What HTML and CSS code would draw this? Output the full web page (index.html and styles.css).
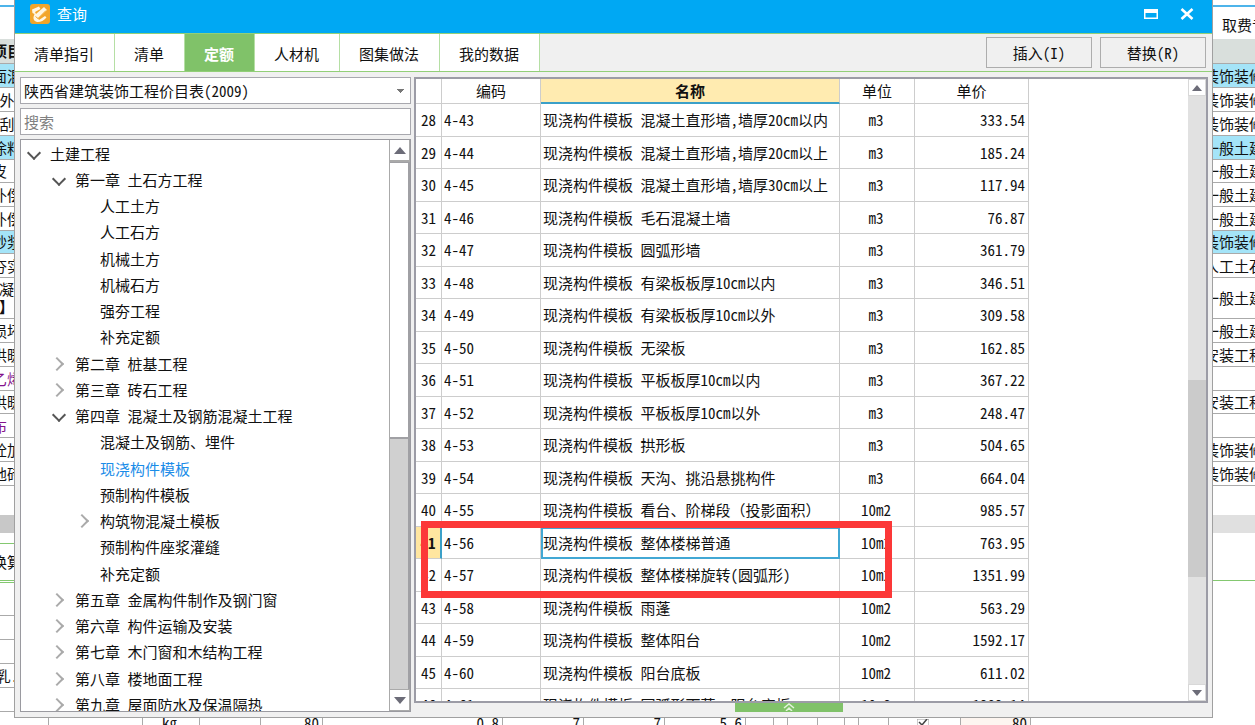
FILE: index.html
```html
<!DOCTYPE html>
<html lang="zh-CN">
<head>
<meta charset="utf-8">
<title>查询</title>
<link rel="stylesheet" href="styles.css">
</head>
<body>
<div class="desktop">
  <aside class="strip strip-left">
    <div class="strip-top"></div>
    <div class="strip-head">项目</div>
    <div class="cell blue">面混</div>
    <div class="cell">外</div>
    <div class="cell">刮</div>
    <div class="cell blue">涂料</div>
    <div class="cell short">皮　</div>
    <div class="cell">补偿</div>
    <div class="cell">补偿</div>
    <div class="cell short blue">砂浆</div>
    <div class="cell">夯实</div>
    <div class="cell tall"><span>混凝</span><b>】</b></div>
    <div class="cell">损坏</div>
    <div class="cell">供暖</div>
    <div class="cell purple">乙烯</div>
    <div class="cell short">供暖</div>
    <div class="cell purple">布　</div>
    <div class="cell">砼加</div>
    <div class="cell">地砖</div>
    <div class="blank"></div>
    <div class="bar dark"></div>
    <div class="caption">换算</div>
    <div class="blank"></div>
    <div class="cell"></div>
    <div class="cell"></div>
    <div class="cell">乳.</div>
    <div class="cell"></div>
  </aside>

  <main class="dialog">
    <header class="titlebar">
      <svg class="logo" viewBox="0 0 20 20" aria-hidden="true">
        <rect width="20" height="20" rx="3" fill="#f2a52a"/>
        <path d="M2 5.500 9 2.500l1.500 2.500L5 8l1 2 8-7 3 3-9 8.500 1 1.500 6-4 1.500 1.500Q12 18.500 7 18q-4-1-3.500-5L4.500 10 2.500 9z" fill="#fff6e2"/>
        <path d="m5.500 12.500 2.500 2 8-8" fill="none" stroke="#f2a52a"/>
      </svg>
      <h1>查询</h1>
      <button class="winbtn" aria-label="最大化"><svg width="14" height="10" viewBox="0 0 14 10"><path d="M0 0h14v10H0zM1.500 4v4.500h11V4z" fill="#fff" fill-rule="evenodd"/></svg></button>
      <button class="winbtn" aria-label="关闭"><svg width="14" height="12" viewBox="0 0 14 12"><path d="m1.500 1 11 10m0-10-11 10" stroke="#fff" stroke-width="2.600"/></svg></button>
    </header>

    <nav class="toolbar">
      <button class="tab">清单指引</button>
      <button class="tab">清单</button>
      <button class="tab active">定额</button>
      <button class="tab">人材机</button>
      <button class="tab">图集做法</button>
      <button class="tab">我的数据</button>
      <div class="actions">
        <button class="action">插入(I)</button>
        <button class="action">替换(R)</button>
      </div>
    </nav>

    <div class="body">
      <section class="side">
        <select class="field combo" aria-label="定额库"><option>陕西省建筑装饰工程价目表(2009)</option></select>
        <input class="field" type="text" placeholder="搜索" aria-label="搜索">
        <div class="treebox">
          <ul class="tree">
            <li class="node l0 open">土建工程</li>
            <li class="node l1 open">第一章 土石方工程</li>
            <li class="node l2">人工土方</li>
            <li class="node l2">人工石方</li>
            <li class="node l2">机械土方</li>
            <li class="node l2">机械石方</li>
            <li class="node l2">强夯工程</li>
            <li class="node l2">补充定额</li>
            <li class="node l1 closed">第二章 桩基工程</li>
            <li class="node l1 closed">第三章 砖石工程</li>
            <li class="node l1 open">第四章 混凝土及钢筋混凝土工程</li>
            <li class="node l2">混凝土及钢筋、埋件</li>
            <li class="node l2 current">现浇构件模板</li>
            <li class="node l2">预制构件模板</li>
            <li class="node l2 closed">构筑物混凝土模板</li>
            <li class="node l2">预制构件座浆灌缝</li>
            <li class="node l2">补充定额</li>
            <li class="node l1 closed">第五章 金属构件制作及钢门窗</li>
            <li class="node l1 closed">第六章 构件运输及安装</li>
            <li class="node l1 closed">第七章 木门窗和木结构工程</li>
            <li class="node l1 closed">第八章 楼地面工程</li>
            <li class="node l1 closed">第九章 屋面防水及保温隔热</li>
          </ul>
          <div class="scroll scroll-tree">
            <button class="arrow" aria-label="向上"><svg width="12" height="7" viewBox="0 0 12 7"><path d="M0 7 6 0l6 7z"/></svg></button>
            <div class="thumb"></div>
            <div class="rest"></div>
            <button class="arrow" aria-label="向下"><svg width="12" height="7" viewBox="0 0 12 7"><path d="M0 0h12L6 7z"/></svg></button>
          </div>
        </div>
      </section>

      <section class="content">
        <div class="gridbox">
          <div class="gridview">
            <table>
              <colgroup><col class="c-no"><col class="c-code"><col class="c-name"><col class="c-unit"><col class="c-price"></colgroup>
              <thead><tr><th></th><th>编码</th><th class="sorted">名称</th><th>单位</th><th>单价</th></tr></thead>
              <tbody>
                <tr><td>28</td><td>4-43</td><td>现浇构件模板 混凝土直形墙,墙厚20cm以内</td><td>m3</td><td>333.54</td></tr>
                <tr><td>29</td><td>4-44</td><td>现浇构件模板 混凝土直形墙,墙厚20cm以上</td><td>m3</td><td>185.24</td></tr>
                <tr><td>30</td><td>4-45</td><td>现浇构件模板 混凝土直形墙,墙厚30cm以上</td><td>m3</td><td>117.94</td></tr>
                <tr><td>31</td><td>4-46</td><td>现浇构件模板 毛石混凝土墙</td><td>m3</td><td>76.87</td></tr>
                <tr><td>32</td><td>4-47</td><td>现浇构件模板 圆弧形墙</td><td>m3</td><td>361.79</td></tr>
                <tr><td>33</td><td>4-48</td><td>现浇构件模板 有梁板板厚10cm以内</td><td>m3</td><td>346.51</td></tr>
                <tr><td>34</td><td>4-49</td><td>现浇构件模板 有梁板板厚10cm以外</td><td>m3</td><td>309.58</td></tr>
                <tr><td>35</td><td>4-50</td><td>现浇构件模板 无梁板</td><td>m3</td><td>162.85</td></tr>
                <tr><td>36</td><td>4-51</td><td>现浇构件模板 平板板厚10cm以内</td><td>m3</td><td>367.22</td></tr>
                <tr><td>37</td><td>4-52</td><td>现浇构件模板 平板板厚10cm以外</td><td>m3</td><td>248.47</td></tr>
                <tr><td>38</td><td>4-53</td><td>现浇构件模板 拱形板</td><td>m3</td><td>504.65</td></tr>
                <tr><td>39</td><td>4-54</td><td>现浇构件模板 天沟、挑沿悬挑构件</td><td>m3</td><td>664.04</td></tr>
                <tr><td>40</td><td>4-55</td><td>现浇构件模板 看台、阶梯段（投影面积）</td><td>10m2</td><td>985.57</td></tr>
                <tr class="selected"><td>41</td><td>4-56</td><td>现浇构件模板 整体楼梯普通</td><td>10m2</td><td>763.95</td></tr>
                <tr><td>42</td><td>4-57</td><td>现浇构件模板 整体楼梯旋转(圆弧形)</td><td>10m2</td><td>1351.99</td></tr>
                <tr><td>43</td><td>4-58</td><td>现浇构件模板 雨蓬</td><td>10m2</td><td>563.29</td></tr>
                <tr><td>44</td><td>4-59</td><td>现浇构件模板 整体阳台</td><td>10m2</td><td>1592.17</td></tr>
                <tr><td>45</td><td>4-60</td><td>现浇构件模板 阳台底板</td><td>10m2</td><td>611.02</td></tr>
                <tr><td>46</td><td>4-61</td><td>现浇构件模板 圆弧形雨蓬、阳台底板</td><td>10m2</td><td>1282.14</td></tr>
              </tbody>
            </table>
          </div>
          <div class="scroll scroll-grid">
            <button class="arrow" aria-label="向上"><svg width="10" height="6" viewBox="0 0 10 6"><path d="M0 6 5 0l5 6z"/></svg></button>
            <div class="before"></div>
            <div class="thumb"></div>
            <div class="rest"></div>
            <button class="arrow" aria-label="向下"><svg width="10" height="6" viewBox="0 0 10 6"><path d="M0 0h10L5 6z"/></svg></button>
          </div>
          <div class="highlight"></div>
        </div>
        <button class="expander" aria-label="展开"><svg width="12" height="8" viewBox="0 0 12 8"><path d="m1 5 5-4 5 4M3 8l3-3 3 3" fill="none" stroke="#e4f4dc" stroke-width="1.500"/></svg></button>
      </section>
    </div>
  </main>

  <aside class="strip strip-right">
    <div class="strip-top">取费专业</div>
    <div class="strip-head"></div>
    <div class="cell blue">装饰装修</div>
    <div class="cell">装饰装修</div>
    <div class="cell">装饰装修</div>
    <div class="cell blue">一般土建</div>
    <div class="cell short">一般土建</div>
    <div class="cell">一般土建</div>
    <div class="cell">一般土建</div>
    <div class="cell short blue">装饰装修</div>
    <div class="cell">人工土石</div>
    <div class="cell tall">一般土建</div>
    <div class="cell">一般土建</div>
    <div class="cell">安装工程</div>
    <div class="cell"></div>
    <div class="cell short">安装工程</div>
    <div class="cell"></div>
    <div class="cell">装饰装修</div>
    <div class="cell">装饰装修</div>
    <div class="blank"></div>
    <div class="bar"></div>
    <div class="caption"></div>
  </aside>

  <footer class="under">
    <span></span><span></span><span class="mid">kg</span><span></span><span>80</span><span>0.8</span><span>7</span><span>7</span><span>5.6</span><span></span><span></span><span></span><span></span><span></span><span></span>
    <span class="mid"><svg width="12" height="10" viewBox="0 0 12 10"><path d="M0 0h12v10H0z" fill="none" stroke="#999"/><path d="m2 3 3 3 5-6" fill="none" stroke="#444" stroke-width="1.500"/></svg></span>
    <span class="warm">80</span>
  </footer>
</div>
</body>
</html>
```
FILE: styles.css
```css
* { box-sizing: border-box; }

body {
  margin: 0;
  font: 15px/20px "Noto Sans Mono CJK SC", "Noto Sans CJK SC", sans-serif;
  color: #111;
  background: #fff;
}

button, input, select { font: inherit; color: inherit; margin: 0; border-radius: 0; }
button { padding: 0; border: 0; background: none; }

.desktop {
  display: grid;
  grid-template-columns: 14px minmax(0, 1fr) 42px;
  grid-template-rows: minmax(0, 1fr) 7px;
  height: 100vh;
  overflow: hidden;
}

/* window behind the dialog */
.strip { display: flex; flex-direction: column; overflow: hidden; white-space: pre; }
.strip > * { flex: none; display: flex; align-items: center; justify-content: center; }
.strip-top { height: 39px; background: linear-gradient(#4db4ea, #4db4ea) no-repeat 0 5px / 100% 2px; }
.strip-head { height: 25px; background: #d9dfdc; border-bottom: 1px solid #aaa; font-weight: bold; }
.cell { height: 24px; border-bottom: 1px solid #aaa; overflow: hidden; }
.cell.short { height: 23px; }
.cell.tall { height: 41px; line-height: 18px; }
.strip-left .tall { flex-direction: column; align-items: flex-end; }
.cell.blue { background: #a4e4f8; }
.cell.purple { color: #84128c; }
.blank { height: 29px; }
.bar { height: 18px; background: #e0e0e0; }
.bar.dark { background: #c8c8c8; }
.caption { height: 48px; border-bottom: 1px solid #84c870; }
.strip-left .caption { height: 40px; margin-top: 10px; border-top: 1px solid #84c870; border-bottom: 3px double #84c870; }
.strip-left .blank:nth-last-child(5) { height: 33px; border-bottom: 1px solid #aaa; }
.strip-right > * { justify-content: flex-start; }
.strip-right .cell { justify-content: center; }
.strip-right .strip-top { padding: 10px 0 0 9px; }

.under {
  grid-column: 1 / -1;
  display: grid;
  grid-template-columns: 49fr 94fr 57fr 61fr 62fr 180fr 81fr 81fr 81fr 28fr 14fr 30fr 27fr 14fr 30fr 72fr 70fr 224fr;
  overflow: hidden;
  line-height: 10px;
}
.under span { border-right: 1px solid #aaa; text-align: right; padding-right: 3px; }
.under .mid { text-align: center; }
.under .warm { background: #fdf5f0; }

/* dialog */
.dialog {
  display: flex;
  flex-direction: column;
  min-height: 0;
  background: #f0f0f0;
  border: 1px solid #a0a0a0;
  border-top: 0;
}
.titlebar { flex: none; display: flex; align-items: center; height: 33px; padding: 0 18px 6px 15px; background: #00a8f3; }
.logo { width: 20px; height: 20px; }
h1 { flex: 1; margin: 0 0 0 7px; font-size: 15px; font-weight: normal; color: #fff; }
.winbtn { display: flex; margin-left: 22px; }

.toolbar { flex: none; display: flex; height: 39px; border-top: 1px solid #92cf78; border-bottom: 1px solid #92cf78; }
.tab { padding: 3px 20px 0 19px; background: #fff; border-right: 1px solid #b5dfa4; }
.tab.active { background: #80c269; color: #fff; font-weight: bold; }
.actions { display: flex; align-items: center; gap: 8px; margin-left: auto; padding-right: 6px; }
.action { width: 106px; height: 31px; border: 1px solid #adadad; }

.body { flex: 1; min-height: 0; display: flex; gap: 3px; padding: 5px 4px 5px 5px; }
.side { flex: 0 0 391px; display: flex; flex-direction: column; gap: 4px; min-height: 0; }
.field { flex: none; width: 100%; height: 27px; padding: 0 3px; border: 1px solid #a8a8ae; background: #fff; outline: 0; }
.field::placeholder { color: #808080; opacity: 1; }
.combo {
  appearance: none;
  background: linear-gradient(135deg, #777 50%, transparent 50%) no-repeat right 5px center / 4px 4px, linear-gradient(225deg, #777 50%, transparent 50%) no-repeat right 9px center / 4px 4px, #fff;
}
.treebox { flex: 1; display: flex; min-height: 0; background: #fff; border: 1px solid #9a9aa0; }
.tree { flex: 1; margin: 0; padding: 1px 0 0; list-style: none; overflow: hidden; }
.node { position: relative; height: 26px; line-height: 26px; white-space: nowrap; }
.node:nth-child(4n) { height: 27px; }
.l0 { padding-left: 29px; }
.l1 { padding-left: 54px; }
.l2 { padding-left: 79px; }
.current { color: #1a8ce8; }
.open::before, .closed::before {
  content: "";
  position: absolute;
  top: 7px;
  width: 8px;
  height: 8px;
  margin-left: -21px;
  border: solid #555;
  border-width: 0 2px 2px 0;
  transform: rotate(45deg);
}
.closed::before { border-color: #aaa; margin-left: -23px; top: 8px; transform: rotate(-45deg); }

.scroll { flex: none; display: flex; flex-direction: column; }
.arrow { flex: none; display: flex; align-items: center; justify-content: center; border: 1px solid #aaa; background: #fff; }
.arrow path { fill: #6c6c78; }
.scroll-tree { width: 21px; background: #d0d0d0; border-left: 1px solid #aaa; }
.scroll-tree .arrow { height: 22px; border-width: 0 1px 2px 0; }
.scroll-tree .arrow:last-child { border-width: 1px 1px 1px 0; }
.scroll-tree .thumb { flex: 276; background: #fff; border: solid #a0a0a4; border-width: 1px 2px 2px 0; }
.scroll-tree .rest { flex: 252; border-right: 2px solid #a0a0a4; }

.content { flex: 1; min-width: 0; display: flex; flex-direction: column; }
.gridbox { position: relative; flex: 1; display: flex; min-height: 0; background: #fff; border: 2px solid #9c9ca6; }
.gridview { flex: 1; overflow: hidden; }
table { border-collapse: separate; border-spacing: 0; table-layout: fixed; width: 613px; }
.c-no { width: 26px; }
.c-code { width: 99px; }
.c-name { width: 299px; }
.c-unit { width: 75px; }
.c-price { width: 114px; }
th, td { padding: 0; border: solid #cdcdcd; border-width: 0 1px 1px 0; white-space: nowrap; overflow: hidden; line-height: 20px; }
th { height: 25px; font-weight: normal; }
th.sorted { background: #ffebb0; font-weight: bold; border-bottom: 2px solid #3ba0c8; }
td { height: 32px; padding-left: 2px; }
tr:nth-child(odd) td { height: 33px; }
td:first-child { padding: 0; text-align: center; }
td:nth-child(4) { padding: 0 2px 0 0; text-align: center; }
td:nth-child(5) { padding-right: 3px; text-align: right; }
.selected td:first-child { background: #ffe6a0; font-weight: bold; border-right: 2px solid #3ba0c8; }
.selected td:nth-child(3) { padding-left: 0; border: 2px solid #42a8d4; }

.scroll-grid { width: 18px; background: #e1e1e1; }
.scroll-grid .arrow { height: 17px; border-color: #d8d8d8; }
.scroll-grid .before { flex: 285; }
.scroll-grid .thumb { flex: 198; background: #cbcbcb; }
.scroll-grid .rest { flex: 107; }

/* frame over rows 41 and 42 */
.highlight { position: absolute; left: 5px; top: 442px; width: 471px; height: 77px; border: 7px solid #fc3838; }

.expander { flex: none; align-self: flex-start; display: flex; justify-content: center; width: 108px; height: 9px; margin-left: 321px; background: #80c269; }
```
